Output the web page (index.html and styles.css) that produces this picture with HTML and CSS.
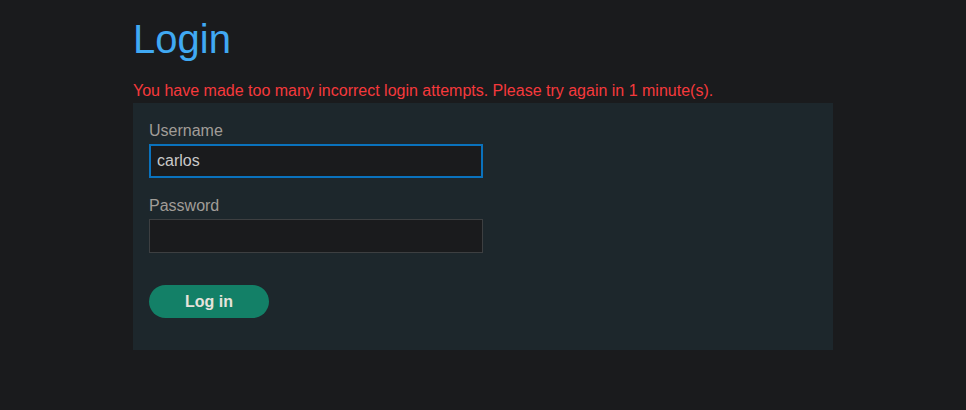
FILE: index.html
```html
<!DOCTYPE html>
<html>
<head>
<meta charset="utf-8">
<link rel="stylesheet" href="styles.css">
</head>
<body>
<div class="container">
  <h1 class="title">Login</h1>
  <p class="error">You have made too many incorrect login attempts. Please try again in 1 minute(s).</p>
  <form class="panel">
    <label class="label">Username</label>
    <input class="input focused" type="text" value="carlos">
    <label class="label">Password</label>
    <input class="input" type="password">
    <button class="button" type="button">Log in</button>
  </form>
</div>
</body>
</html>
```
FILE: styles.css
```css
html, body {
  margin: 0;
  padding: 0;
  background: #1a1b1d;
  font-family: "Liberation Sans", Arial, sans-serif;
}
.container {
  width: 700px;
  margin: 0 auto;
}
.title {
  margin: 0;
  padding-top: 13px;
  font-size: 40px;
  font-weight: normal;
  line-height: 52px;
  color: #40a9f3;
}
.error {
  margin: 16px 0 0 0;
  font-size: 16px;
  line-height: 20px;
  color: #f5393c;
}
.panel {
  display: flex;
  flex-direction: column;
  align-items: flex-start;
  background: #1d272c;
  padding: 17px 16px 32px 16px;
  margin: 2px 0 0 0;
}
.label {
  font-size: 16px;
  line-height: 22px;
  color: #a19d98;
  margin-bottom: 2px;
}
.input {
  box-sizing: border-box;
  width: 334px;
  height: 34px;
  background: #1a1b1d;
  border: 1px solid #3d3f41;
  color: #c9c9c9;
  font-family: "Liberation Sans", Arial, sans-serif;
  font-size: 16px;
  padding: 0 7px;
  margin-bottom: 17px;
  outline: none;
}
.input.focused {
  border: 2px solid #0a72bd;
  padding: 0 6px;
}
.button {
  margin-top: 15px;
  width: 120px;
  height: 33px;
  border: none;
  border-radius: 17px;
  background: #138067;
  color: #e6e3dc;
  font-family: "Liberation Sans", Arial, sans-serif;
  font-weight: bold;
  font-size: 16px;
}
```
